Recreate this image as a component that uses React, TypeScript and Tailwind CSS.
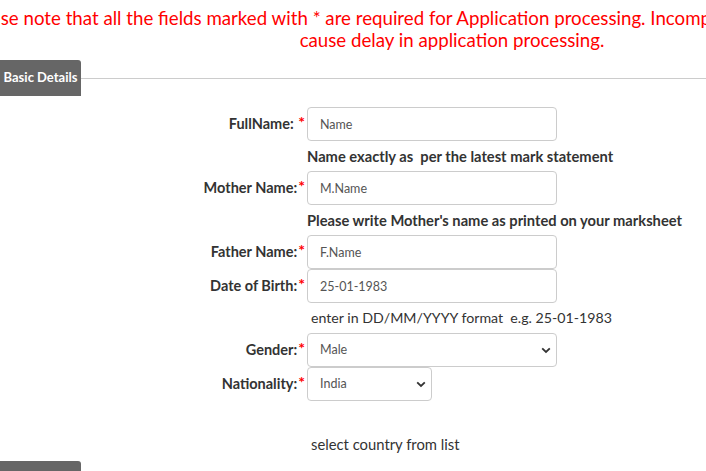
import type { ReactNode } from "react";

const font = { fontFamily: "Lato, 'Open Sans', sans-serif" };

function Label({ children }: { children: ReactNode }) {
  return (
    <div className="flex justify-end items-start pt-[6px] pr-[2px] text-[14.5px] font-bold text-[#333]">
      <span>{children}</span>
      <span className="text-[#ff0000] text-[16px] font-bold leading-none ml-[1px] mt-[1px]">*</span>
    </div>
  );
}

function TextInput({ value }: { value: string }) {
  return (
    <input
      readOnly
      value={value}
      className="w-[250px] h-[34px] border border-[#ccc] rounded-[4px] px-[12px] text-[12.5px] text-[#555] bg-white outline-none"
      style={font}
    />
  );
}

function Chevron() {
  return (
    <svg width="10" height="7" viewBox="0 0 10 7" className="absolute right-[6px] top-[14px] pointer-events-none">
      <path d="M1.2 1.3 L5 5 L8.8 1.3" fill="none" stroke="#333" strokeWidth="1.8" />
    </svg>
  );
}

function SelectBox({ value, width }: { value: string; width: string }) {
  return (
    <div className={`relative ${width}`}>
      <select
        value={value}
        onChange={() => {}}
        className="appearance-none w-full h-[34px] border border-[#ccc] rounded-[4px] pl-[12px] text-[12.5px] text-[#555] bg-white outline-none"
        style={font}
      >
        <option>{value}</option>
      </select>
      <Chevron />
    </div>
  );
}

function Help({ children, bold }: { children: ReactNode; bold?: boolean }) {
  return (
    <div
      className={`h-[30px] flex items-center text-[#333] ${bold ? "font-bold text-[14.7px]" : "pl-[4px] text-[14.2px]"}`}
    >
      {children}
    </div>
  );
}

export default function App() {
  return (
    <div className="w-[706px] h-[471px] overflow-hidden bg-white relative" style={font}>
      {/* notice */}
      <div className="pt-[7px] text-[18.7px] leading-[22px] text-[#ff0000]">
        <div className="ml-[-34px] whitespace-nowrap">
          Please note that all the fields marked with * are required for Application processing. Incomplete application may
        </div>
        <div className="w-[1000px] ml-[-48px] text-center">cause delay in application processing.</div>
      </div>

      {/* section header */}
      <div className="flex items-center mt-[9px]">
        <div className="w-[81px] h-[36px] bg-[#666] rounded-tr-[3px] text-white text-[13px] font-bold flex items-center justify-center shrink-0">
          Basic Details
        </div>
        <div className="flex-1 h-px bg-[#ccc]" />
      </div>

      <div className="grid grid-cols-[307px_1fr] mt-[11px]">
        <Label>FullName:&nbsp;</Label>
        <TextInput value="Name" />

        <div />
        <Help bold>Name exactly as&nbsp; per the latest mark statement</Help>

        <Label>Mother Name:</Label>
        <TextInput value="M.Name" />

        <div />
        <Help bold>Please write Mother's name as printed on your marksheet</Help>

        <Label>Father Name:</Label>
        <TextInput value="F.Name" />

        <Label>Date of Birth:</Label>
        <TextInput value="25-01-1983" />

        <div />
        <Help>enter in DD/MM/YYYY format&nbsp; e.g. 25-01-1983</Help>

        <Label>Gender:</Label>
        <SelectBox value="Male" width="w-[250px]" />

        <Label>Nationality:</Label>
        <SelectBox value="India" width="w-[125px]" />

        <div />
        <div className="h-[60px] flex items-end pb-[6px] pl-[4px] text-[14.8px] text-[#333]">select country from list</div>
      </div>

      <div className="w-[81px] h-[36px] bg-[#666] rounded-tr-[3px]" />
    </div>
  );
}
